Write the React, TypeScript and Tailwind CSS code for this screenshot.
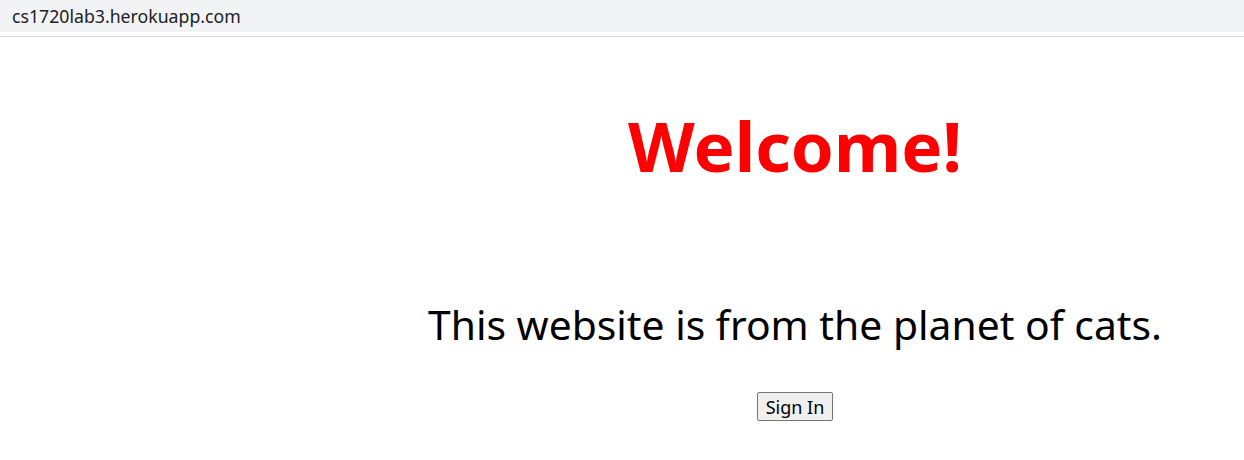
import React from 'react';

const App: React.FC = () => {
  return (
    <div className="min-h-[460px] w-[1244px] bg-white" style={{ fontFamily: '"Noto Sans", "Open Sans", sans-serif' }}>
      {/* Address bar */}
      <div className="h-[37px] border-b border-[#dadce0] bg-white">
        <div className="flex h-[32px] items-center bg-[#f1f3f4] px-3 text-[17.7px] text-[#202124]">
          cs1720lab3.herokuapp.com
        </div>
      </div>

      {/* Page */}
      <div className="flex">
        <div className="w-[346px] shrink-0" />
        <div className="flex flex-1 flex-col items-center">
          <h1 className="mt-[68px] text-[69px] font-bold leading-[80px] text-[#ff0000]">Welcome!</h1>
          <p className="mt-[109px] text-[40.8px] leading-[60px] text-black">This website is from the planet of cats.</p>
          <button className="mt-[38px] h-[29px] rounded-[2px] border border-[#767676] bg-[#efefef] px-[8px] text-[18px] leading-none text-black">
            Sign In
          </button>
        </div>
      </div>
    </div>
  );
};

export default App;
